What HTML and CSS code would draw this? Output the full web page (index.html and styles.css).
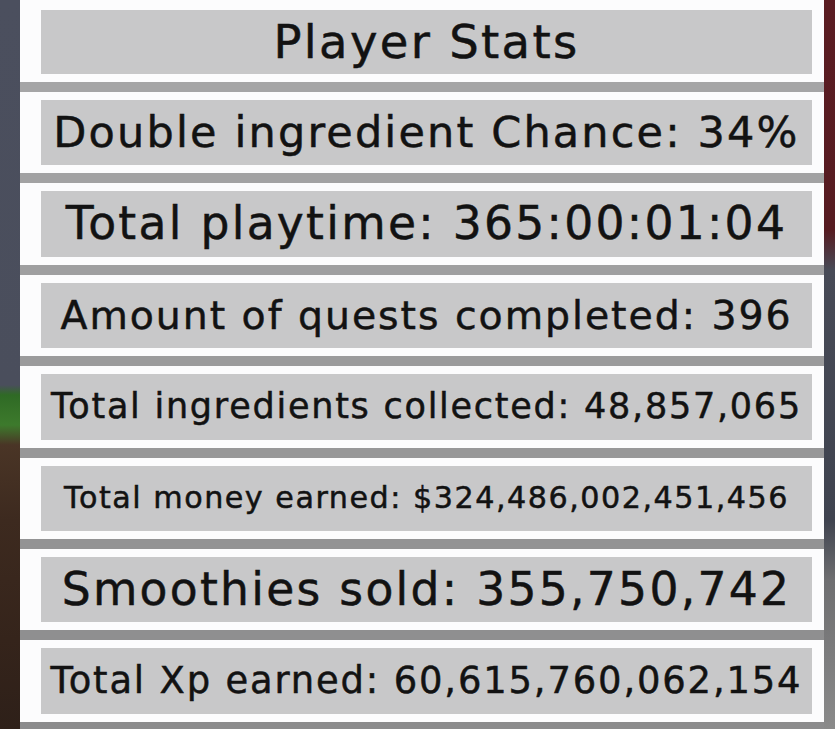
FILE: index.html
```html
<!DOCTYPE html>
<html lang="en">
<head>
<meta charset="utf-8">
<title>Player Stats</title>
<link rel="stylesheet" href="styles.css">
</head>
<body>
<div class="scene">
  <div class="edge edge-left"></div>
  <div class="panel">
    <div class="row first"><div class="box t1">Player Stats</div></div>
    <div class="sep"></div>
    <div class="row"><div class="box t2">Double ingredient Chance: 34%</div></div>
    <div class="sep"></div>
    <div class="row"><div class="box t3">Total playtime: 365:00:01:04</div></div>
    <div class="sep"></div>
    <div class="row"><div class="box t4">Amount of quests completed: 396</div></div>
    <div class="sep"></div>
    <div class="row"><div class="box t5">Total ingredients collected: 48,857,065</div></div>
    <div class="sep"></div>
    <div class="row"><div class="box t6">Total money earned: $324,486,002,451,456</div></div>
    <div class="sep"></div>
    <div class="row"><div class="box t7">Smoothies sold: 355,750,742</div></div>
    <div class="sep"></div>
    <div class="row"><div class="box t8">Total Xp earned: 60,615,760,062,154</div></div>
    <div class="sep"></div>
  </div>
  <div class="edge edge-right"></div>
</div>
</body>
</html>
```

FILE: styles.css
```css
html, body {
  margin: 0;
  padding: 0;
  background: #4a4e5c;
}

.scene {
  display: flex;
  width: 835px;
  height: 729px;
  overflow: hidden;
}

.edge {
  flex: none;
}

.edge-left {
  width: 20px;
  background: linear-gradient(to bottom,
    #4b4f5e 0px, #4a4e5c 385px,
    #2f6a25 395px, #3d7a2c 425px, #4a3526 445px,
    #3d2a1f 520px, #35241b 640px, #2e2019 729px);
}

.edge-right {
  width: 11px;
  background: linear-gradient(to bottom,
    #5a1c22 0px, #561b21 230px,
    #474a56 270px, #3f434f 520px,
    #6e6e70 580px, #8a8a8a 729px);
}

.panel {
  flex: 1;
  display: flex;
  flex-direction: column;
  background: #fcfcfd;
  font-family: "DejaVu Sans", "Liberation Sans", sans-serif;
  color: #121212;
}

.row {
  padding: 8px 12px 8px 21px;
}

.row.first {
  padding-top: 10px;
}

.box {
  height: 65.4px;
  background: #c8c8c9;
  display: flex;
  align-items: center;
  justify-content: center;
  white-space: nowrap;
  letter-spacing: 0.05em;
  line-height: 1;
  -webkit-text-stroke: 0.5px #121212;
}

.row.first .box {
  height: 64px;
}

.sep {
  height: 10px;
  flex: none;
  background: #a5a5a6;
}

.sep:nth-child(4) { background: #a2a2a3; }
.sep:nth-child(6) { background: #9f9fa0; }
.sep:nth-child(8) { background: #9b9b9c; }
.sep:nth-child(10) { background: #979798; }
.sep:nth-child(12) { background: #939394; }
.sep:nth-child(14) { background: #8f8f90; }
.sep:nth-child(16) { background: #8b8b8c; }

.t1 { font-size: 46.5px; }
.t2 { font-size: 43px; }
.t3 { font-size: 45.6px; }
.t4 { font-size: 39.4px; }
.t5 { font-size: 35px; }
.t6 { font-size: 30.2px; }
.t7 { font-size: 45.6px; }
.t8 { font-size: 36.9px; }
```
